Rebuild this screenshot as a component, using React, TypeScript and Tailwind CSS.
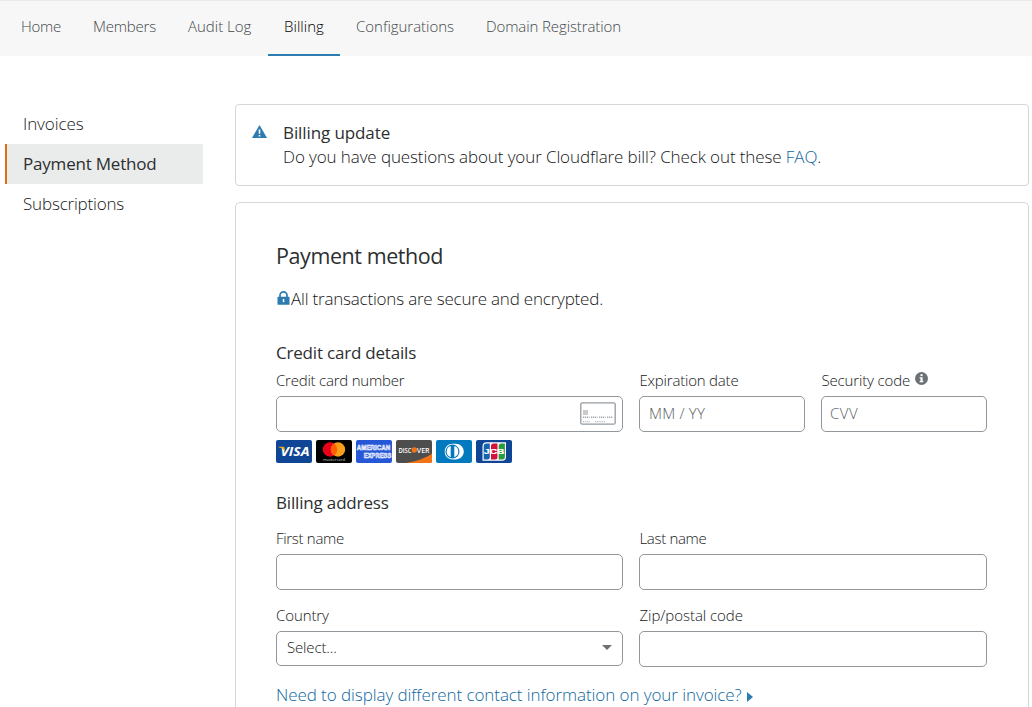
import React from "react";

const tabs = [
  { label: "Home", cls: "tracking-[-0.3px] w-[40px]" },
  { label: "Members", cls: "tracking-[-0.2px] w-[63px]" },
  { label: "Audit Log", cls: "tracking-[0px] w-[64px]" },
  { label: "Billing", cls: "tracking-[0.05px] w-[40px]", active: true },
  { label: "Configurations", cls: "tracking-[-0.02px] w-[98px]" },
  { label: "Domain Registration", cls: "tracking-[-0.1px] w-[135px]" },
];

const fieldBox = "w-full rounded-[5px] border border-[#92979b] bg-white";

function Field({ label, tracking, height = "h-9", className = "", info, children }: {
  label: string; tracking: string; height?: string; className?: string; info?: boolean; children?: React.ReactNode;
}) {
  return (
    <label className={"block " + className}>
      <span className="flex h-[26px] items-start whitespace-nowrap text-[15px] leading-[21px]">
        <span className={tracking}>{label}</span>
        {info && (
          <svg viewBox="0 0 14 14" className="mt-[2px] ml-[5px] size-[13px]">
            <circle cx="7" cy="7" r="7" fill="#6c7175" />
            <rect x="5.9" y="2.4" width="2.3" height="2" fill="#fff" />
            <path d="M5 5.6h3.2v4.2H9v1.3H5V9.8h.9V6.9H5z" fill="#fff" />
          </svg>
        )}
      </span>
      <span className={"flex items-center pb-[2px] text-[15px] " + height + " " + fieldBox}>{children}</span>
    </label>
  );
}

function CardOutline() {
  return (
    <svg viewBox="0 0 36 23" className="mr-[6px] ml-auto h-[23px] w-9">
      <rect x="0.8" y="0.8" width="34.4" height="21.4" rx="1.5" fill="#fff" stroke="#969b9f" strokeWidth="1.3" />
      <rect x="3" y="8" width="5" height="5" fill="#c9cbcc" />
      <path d="M3 15.3h6.5m1.5 0h6.5m1.5 0h6.5m1.5 0h6" stroke="#a4a8ab" strokeWidth="1.4" strokeDasharray="1.3 0.7" />
      <path d="M3 19.7h7m5 0h10" stroke="#b4b7b9" strokeWidth="1.3" strokeDasharray="1 0.8" />
    </svg>
  );
}

const sans = "Open Sans, sans-serif";

function Brands() {
  const cls = "h-[23px] w-9 rounded-[2px]";
  return (
    <div className="mt-2 flex h-[23px] gap-1">
      <svg viewBox="0 0 36 23" className={cls}>
        <rect width="36" height="23" fill="#0e4595" />
        <text x="4.5" y="16.3" fontFamily={sans} fontSize="13" fontWeight="700" fontStyle="italic" fill="#fff" textLength="29" lengthAdjust="spacingAndGlyphs">VISA</text>
        <path d="M2.5 6.8h4.2c1 0 1.5.4 1.7 1.2l1 4.5C8.3 9.7 5.9 7.9 2.5 7.2z" fill="#f2ae14" />
      </svg>
      <svg viewBox="0 0 36 23" className={cls}>
        <rect width="36" height="23" fill="#000" />
        <circle cx="14" cy="9.5" r="7.2" fill="#eb001b" />
        <circle cx="22" cy="9.5" r="7.2" fill="#f79e1b" />
        <path d="M18 3.5a7.2 7.2 0 0 1 0 12a7.2 7.2 0 0 1 0-12" fill="#ff5f00" />
        <text x="7" y="20.9" fontFamily={sans} fontSize="4.3" fontWeight="400" fill="#ccc" textLength="22" lengthAdjust="spacingAndGlyphs">mastercard</text>
      </svg>
      <svg viewBox="0 0 36 23" className={cls}>
        <rect width="36" height="23" fill="#2557d6" />
        <g fontFamily="Liberation Sans, sans-serif" fontSize="7" fontWeight="700" fill="#5f84e2" stroke="#fff" strokeWidth="0.55">
          <text x="0.8" y="10.2" textLength="33.4" lengthAdjust="spacingAndGlyphs">AMERICAN</text>
          <text x="7.8" y="18" textLength="27.6" lengthAdjust="spacingAndGlyphs">EXPRESS</text>
        </g>
      </svg>
      <svg viewBox="0 0 36 23" className={cls}>
        <rect width="36" height="23" fill="#4d4d4d" />
        <path d="M36 13.5C30 18 20 21.5 10 23h26z" fill="#f47216" />
        <g fontFamily={sans} fontSize="7" fontWeight="600" fill="#fff">
          <text x="2.5" y="12.5" textLength="13" lengthAdjust="spacingAndGlyphs">DISC</text>
          <text x="20.8" y="12.5" textLength="12.7" lengthAdjust="spacingAndGlyphs">VER</text>
        </g>
        <circle cx="18.3" cy="10" r="2.7" fill="#f47216" />
      </svg>
      <svg viewBox="0 0 36 23" className={cls}>
        <rect width="36" height="23" fill="#0079be" />
        <path d="M16.5 3.7h3c4.500 0 8.300 3.200 8.300 7.900s-3.800 7.900-8.300 7.900h-3c-4.400 0-7.800-3.300-7.800-7.900s3.400-7.900 7.800-7.900z" fill="#fff" />
        <circle cx="16.5" cy="11.6" r="7" fill="#0079be" />
        <path d="M14.7 6a5.9 5.9 0 0 0 0 11.2zM18.300 6a5.900 5.900 0 0 1 0 11.200z" fill="#fff" />
      </svg>
      <svg viewBox="0 0 36 23" className={cls}>
        <rect width="36" height="23" fill="#0e4595" />
        <path d="M10.500 2.200H30v14.800a3.800 3.800 0 0 1-3.800 3.800H6.500V6.200a4 4 0 0 1 4-4z" fill="#fff" />
        <path d="M10.500 3.500h3.300v13.500a2.500 2.500 0 0 1-2.500 2.500H7.700V6.200a2.700 2.700 0 0 1 2.800-2.700z" fill="#1564b0" />
        <path d="M17.500 3.500h4v13.500a2.500 2.500 0 0 1-2.500 2.500h-4V6a2.500 2.500 0 0 1 2.500-2.500z" fill="#d1133d" />
        <path d="M25.200 3.500h3.700v13.500a2.500 2.500 0 0 1-2.500 2.500h-3.700V6a2.500 2.500 0 0 1 2.500-2.500z" fill="#2b9a3e" />
        <text x="8" y="14" fontFamily="Liberation Sans, sans-serif" fontSize="7.4" fontWeight="700" fill="#fff" stroke="#fff" strokeWidth="0.2" textLength="20.500" lengthAdjust="spacingAndGlyphs">JCB</text>
      </svg>
    </div>
  );
}

export default function App() {
  return (
    <div className="h-[707px] w-[1032px] overflow-hidden bg-white font-['Open_Sans',sans-serif] font-light text-[#151718]">
      <nav className="flex h-14 border-t border-[#ebebeb] bg-[#f7f7f7] pl-[5px] text-[15px] leading-[50px] text-[#43484b]">
        {tabs.map((t) => (
          <a key={t.label} className={"px-4 " + (t.active ? "border-b-2 border-[#2c7cb0] text-black" : "")}>
            <span className={"block whitespace-nowrap " + t.cls}>{t.label}</span>
          </a>
        ))}
      </nav>
      <div className="flex gap-8 pt-12 pl-[5px]">
        <aside className="w-[198px] text-[17px] leading-10">
          <a className="block h-10 pl-[18px] tracking-[-0.1px]">Invoices</a>
          <a className="block h-10 border-l-2 border-[#e06d10] bg-[#eaebeb] pl-4 font-normal tracking-[-0.2px] text-[#2c2f30]">Payment Method</a>
          <a className="block h-10 pl-[18px] tracking-[-0.18px]">Subscriptions</a>
        </aside>
        <main className="w-[794px]">
          <section className="flex h-[82px] rounded border border-[#d5d7d8] pt-4 pl-4 text-[17px] leading-6">
            <svg viewBox="0 0 15 13" className="mt-[4px] mr-4 h-[13px] w-[15px]">
              <path d="M7.5 0L15 13H0z" fill="#2c7cb0" />
              <path d="M6.7 4.5h1.6v4.3H6.7zM6.7 9.9h1.6v1.5H6.7z" fill="#fff" />
            </svg>
            <div>
              <h2 className="font-normal tracking-[-0.1px] text-[#2c2f30]">Billing update</h2>
              <p className="whitespace-nowrap tracking-[-0.11px]">
                Do you have questions about your Cloudflare bill? Check out these <a className="text-[#0f679e]">FAQ</a>.
              </p>
            </div>
          </section>
          <section className="mt-4 h-[600px] rounded-[5px] border border-[#d5d7d8] px-10 pt-[38px]">
            <h1 className="h-[30px] text-[21.5px] leading-[30px] font-normal tracking-[-0.42px] text-[#2c2f30]">Payment method</h1>
            <p className="mt-4 flex h-6 text-[17px] leading-6 tracking-[-0.2px]">
              <svg viewBox="0 0 13 14" className="mt-[4px] mr-px ml-px h-[14px] w-[13px]">
                <path d="M3 6V4.3a3.500 3.500 0 0 1 7 0V6" fill="none" stroke="#2c7cb0" strokeWidth="1.7" />
                <rect x="0.5" y="5.8" width="12" height="8" rx="0.6" fill="#2c7cb0" />
                <path d="M5.8 8h1.5v3.200H5.800z" fill="#fff" />
              </svg>
              All transactions are secure and encrypted.
            </p>
            <h2 className="mt-[30px] h-6 text-[17px] leading-6 font-normal tracking-[-0.2px] text-[#2c2f30]">Credit card details</h2>
            <div className="mt-[5px] flex gap-4">
              <Field label="Credit card number" tracking="tracking-[-0.22px]" className="w-[347px]"><CardOutline /></Field>
              <Field label="Expiration date" tracking="pl-[0.5px] tracking-[-0.2px]" className="w-[166px]">
                <span className="pl-[9px] tracking-[0.2px] text-[#5c6164]">MM / YY</span>
              </Field>
              <Field label="Security code" tracking="pl-[0.5px] tracking-[-0.15px]" className="w-[166px]" info>
                <span className="pl-[8px] tracking-[0.5px] text-[#5c6164]">CVV</span>
              </Field>
            </div>
            <Brands />
            <h2 className="mt-[28px] h-6 text-[17px] leading-6 font-normal tracking-[-0.17px] text-[#2c2f30]">Billing address</h2>
            <div className="mt-[13px] flex gap-4">
              <Field label="First name" tracking="tracking-[-0.3px]" className="w-[347px]" />
              <Field label="Last name" tracking="pl-[0.5px] tracking-[-0.33px]" className="w-[348px]" />
            </div>
            <div className="mt-[15px] flex gap-4">
              <Field label="Country" tracking="tracking-[-0.1px]" className="w-[347px]" height="h-[35px]">
                <span className="pl-[10px] tracking-[-0.15px]">Select...</span>
                <svg viewBox="0 0 10 5" className="mr-[10px] mb-px ml-auto h-[5px] w-[10px]"><path d="M0 0h10L5 5z" fill="#6c7175" /></svg>
              </Field>
              <Field label="Zip/postal code" tracking="pl-[0.5px] tracking-[-0.05px]" className="w-[348px]" />
            </div>
            <a className="mt-4 flex h-6 items-center text-[17px] leading-6 tracking-[-0.07px] text-[#0f679e]">
              Need to display different contact information on your invoice?
              <svg viewBox="0 0 6 10" className="mt-[3px] ml-[5px] h-[10px] w-[6px]"><path d="M0 0l6 5-6 5z" fill="#2c7cb0" /></svg>
            </a>
          </section>
        </main>
      </div>
    </div>
  );
}
